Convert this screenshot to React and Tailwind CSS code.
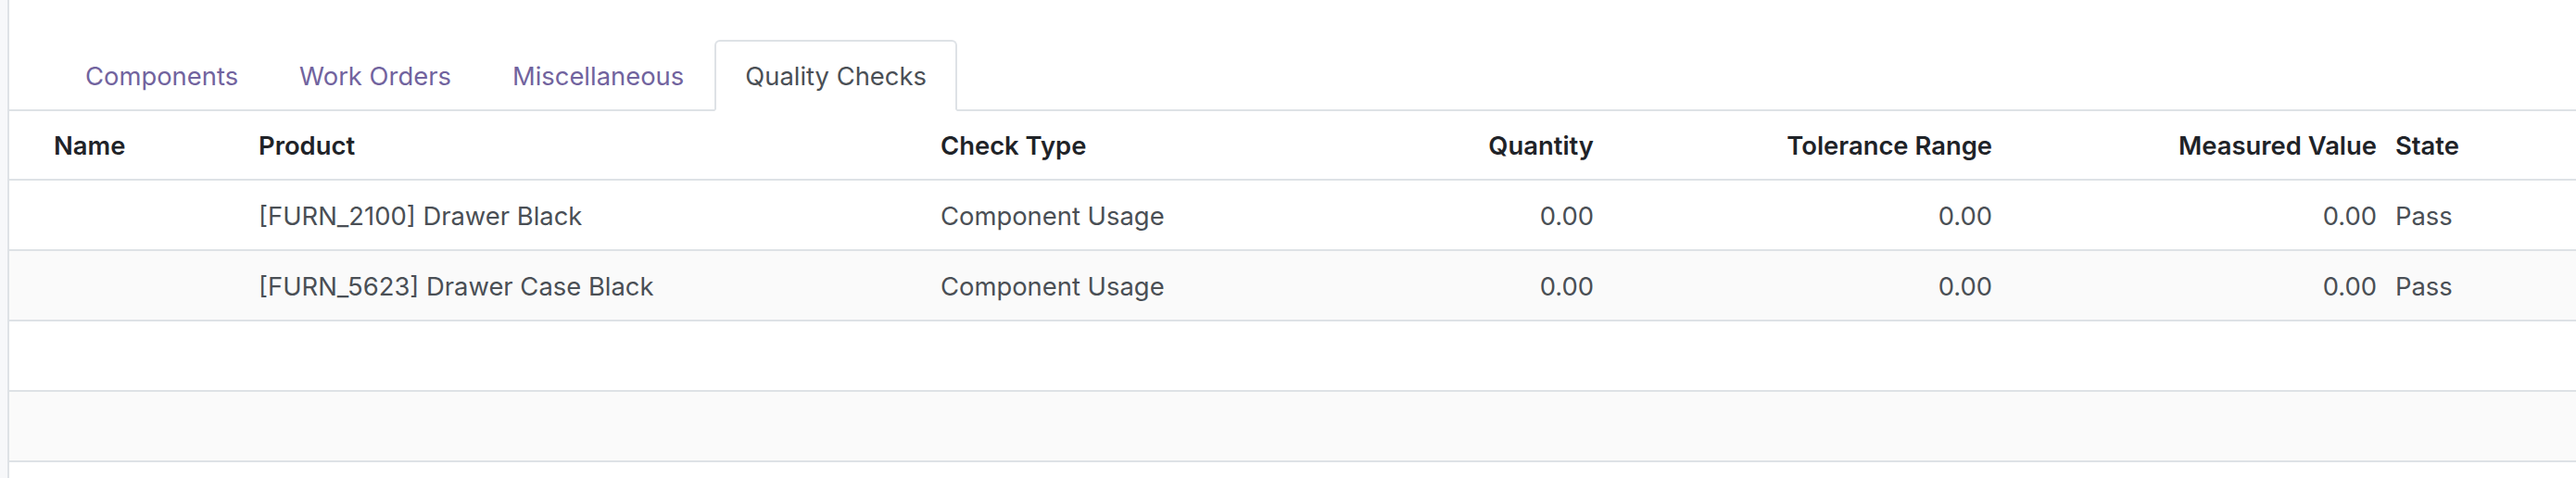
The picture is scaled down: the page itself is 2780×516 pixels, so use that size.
import React from 'react';

const tabs = ['Components', 'Work Orders', 'Miscellaneous', 'Quality Checks'];

const rows = [
  { product: '[FURN_2100] Drawer Black', type: 'Component Usage', qty: '0.00', tol: '0.00', measured: '0.00', state: 'Pass' },
  { product: '[FURN_5623] Drawer Case Black', type: 'Component Usage', qty: '0.00', tol: '0.00', measured: '0.00', state: 'Pass' },
  null,
  null,
];

const grid = 'grid grid-cols-[259px_736px_395px_330px_430px_415px_1fr] items-center pt-[3px]';

export default function App() {
  const active = 'Quality Checks';

  return (
    <div className="flex h-[516px] w-full overflow-hidden bg-white font-['Inter',sans-serif] text-[27.4px]">
      {/* left gutter */}
      <div className="w-[10px] shrink-0 border-r-2 border-[#dee2e6] bg-[#f7f8fa]" />

      <div className="flex-1">
        {/* Tabs */}
        <div className="flex items-end border-b-2 border-[#dee2e6] pl-[49px] pt-[43px]">
          {tabs.map((tab) => (
            <div
              key={tab}
              className={
                tab === active
                  ? '-mb-[2px] flex h-[77px] items-center rounded-t-[6px] border-2 border-[#dee2e6] border-b-white bg-white px-[31px] pt-[3px] text-[#4a4f55]'
                  : '-mb-[2px] flex h-[77px] items-center border-2 border-transparent px-[31px] pt-[3px] text-[#71639e]'
              }
            >
              {tab}
            </div>
          ))}
        </div>

        {/* Header */}
        <div className={`${grid} h-[75px] border-b-2 border-[#dee2e6] font-semibold text-[#1f2328]`}>
          <div className="pl-[48px]">Name</div>
          <div className="pl-[10px]">Product</div>
          <div className="pl-[10px]">Check Type</div>
          <div className="pr-[10px] text-right">Quantity</div>
          <div className="pr-[10px] text-right">Tolerance Range</div>
          <div className="pr-[10px] text-right">Measured Value</div>
          <div className="pl-[10px]">State</div>
        </div>

        {/* Rows */}
        {rows.map((row, i) => (
          <div
            key={i}
            className={`${grid} h-[76px] border-b-2 border-[#dee2e6] text-[#4a4f55] ${i % 2 === 1 ? 'bg-[#fafafa]' : 'bg-white'}`}
          >
            {row && (
              <>
                <div className="pl-[48px]"></div>
                <div className="pl-[10px]">{row.product}</div>
                <div className="pl-[10px]">{row.type}</div>
                <div className="pr-[10px] text-right">{row.qty}</div>
                <div className="pr-[10px] text-right">{row.tol}</div>
                <div className="pr-[10px] text-right">{row.measured}</div>
                <div className="pl-[10px]">{row.state}</div>
              </>
            )}
          </div>
        ))}
      </div>
    </div>
  );
}
